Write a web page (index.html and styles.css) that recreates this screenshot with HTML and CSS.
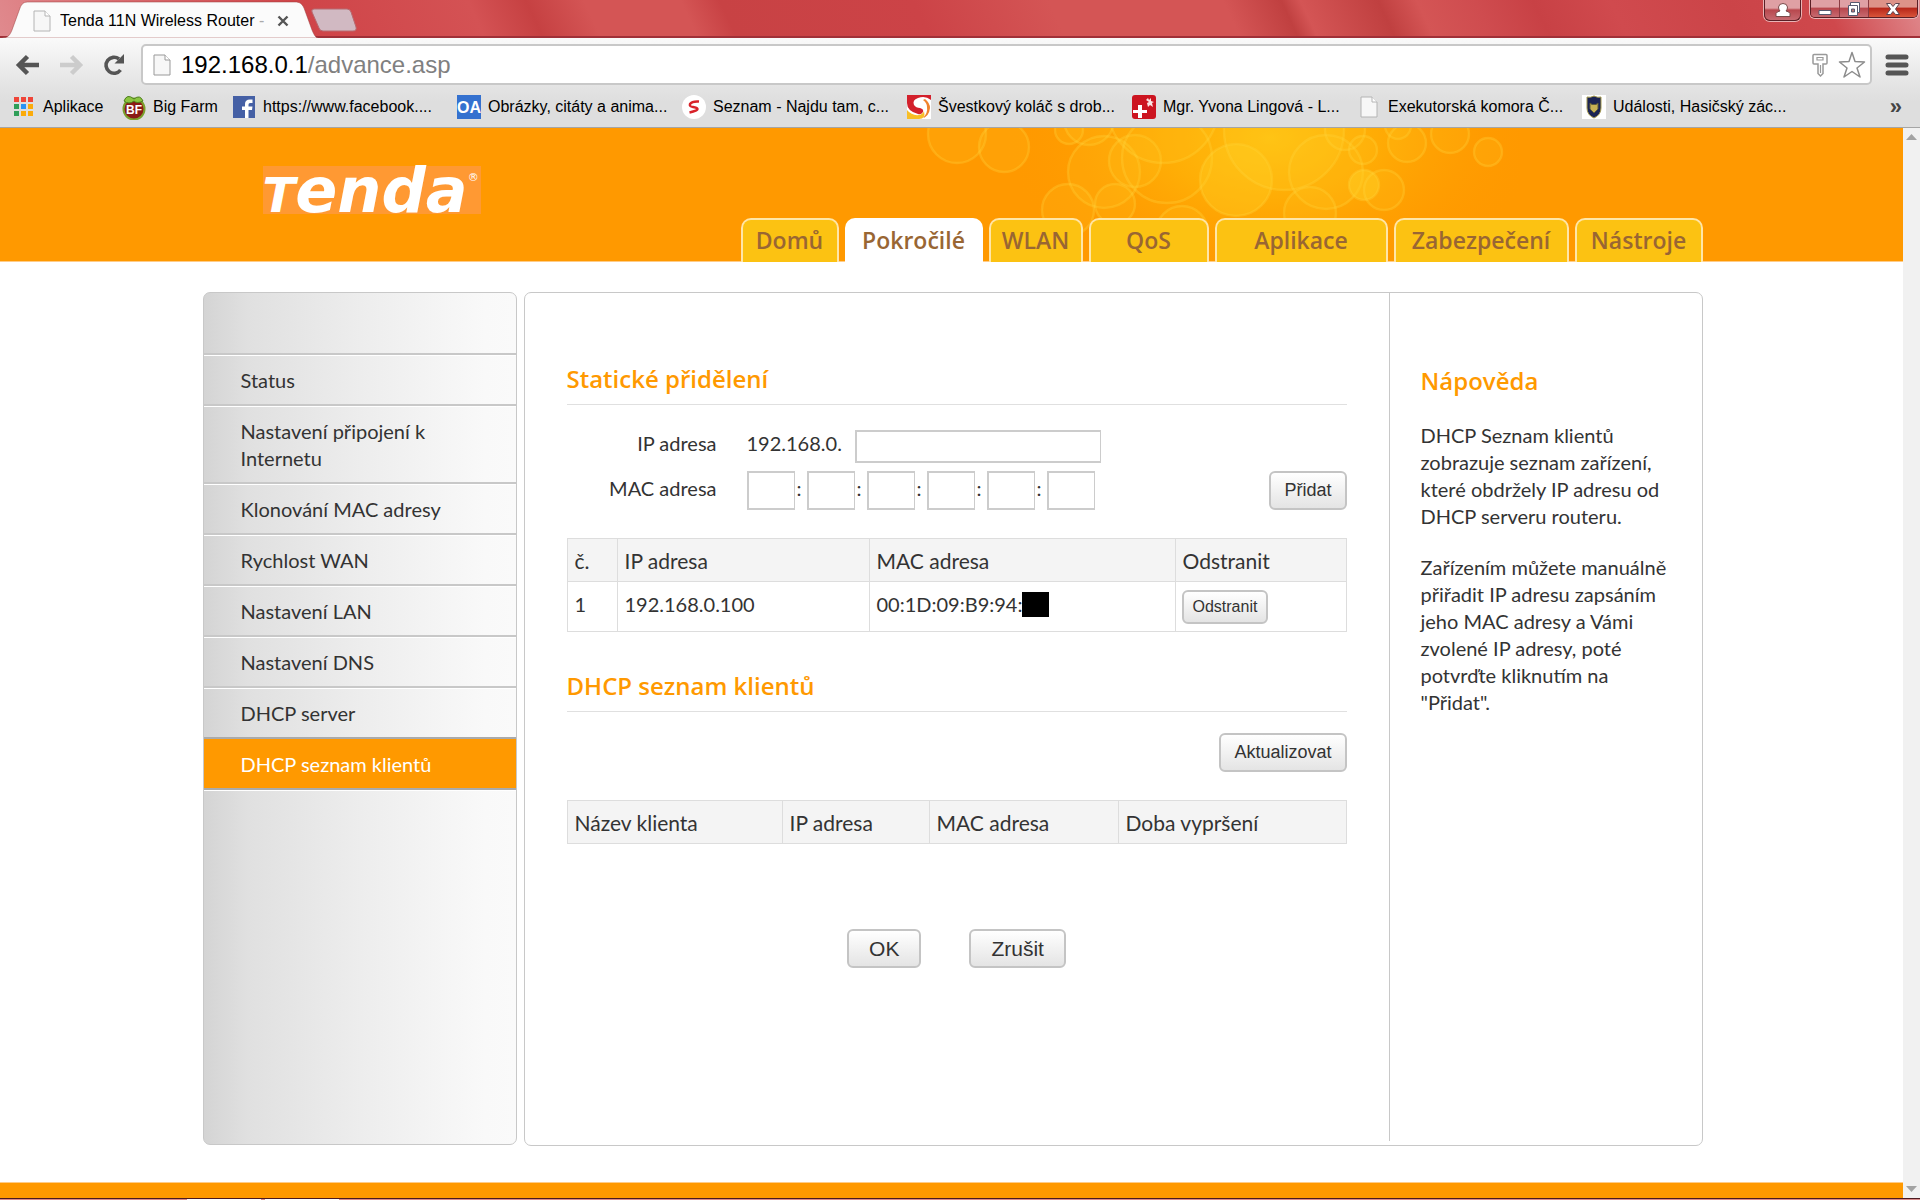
FILE: index.html
```html
<!DOCTYPE html>
<html lang="cs">
<head>
    <meta charset="UTF-8">
    <meta name="viewport" content="width=device-width, initial-scale=1.0">
    <title>Tenda 11N Wireless Router</title>
    <link rel="stylesheet" href="styles.css">
</head>
<body>

    <!-- window frame -->
    <div class="titlebar">
        <div class="browser-tab">
            <svg class="tab-shape" viewBox="0 0 316 37" preserveAspectRatio="none">
                <path d="M0 37 C6 37 8 34 10 29 L18 7 C20 2 22 1 27 1 H293 C298 1 300 3 302 7 L310 29 C312 34 314 37 316 37 Z" fill="#fbfbfb" stroke="#9c3c3c" stroke-opacity=".5"/>
            </svg>
            <svg class="page-icon" viewBox="0 0 18 22"><path d="M1 1h11l5 5v15H1z" fill="#f7f7f7" stroke="#b4b4b4"/><path d="M12 1v5h5" fill="#fff" stroke="#b4b4b4"/></svg>
            <span class="tab-title">Tenda 11N Wireless Router <i>-</i></span>
            <button class="tab-close" aria-label="Zavřít">
                <svg width="12" height="12" viewBox="0 0 12 12"><path d="M1.500 1.500l9 9M10.500 1.500l-9 9" stroke="#555" stroke-width="2.400"/></svg>
            </button>
        </div>
        <svg class="new-tab" width="48" height="24" viewBox="0 0 48 24"><path d="M4 1h33q3 0 4 3l5 15q1 4-3 4H13q-3 0-4-3L2 4q-1-3 2-3z" fill="#d1b9c2" stroke="#b76a70"/></svg>
        <div class="window-buttons">
            <button class="user-btn" aria-label="Uživatel">
                <svg width="16" height="16" viewBox="0 0 16 16"><path d="M1 14.500v-3q1-2 4-2.500-1.500-1.500-1.500-4Q4 1.500 8 1.500T12.500 5q0 2.500-1.500 4 3 .5 4 2.500v3z" fill="#fff" stroke="#7a4a4a"/></svg>
            </button>
            <div class="window-group">
                <button aria-label="Minimalizovat"><svg width="14" height="16" viewBox="0 0 14 16"><path d="M1 9.500h12v4H1z" fill="#fff" stroke="#555a70"/></svg></button>
                <button aria-label="Obnovit"><svg width="16" height="16" viewBox="0 0 16 16"><path d="M4.500 1.500h9v10h-9z" fill="#fff" stroke="#555a70"/><path d="M2.500 4.500h9v10h-9z" fill="#fff" stroke="#555a70"/><path d="M5.500 8h3v3h-3z" fill="#b77" stroke="#555a70"/></svg></button>
                <button class="close-btn" aria-label="Zavřít okno"><svg width="16" height="14" viewBox="0 0 16 14"><path d="M1.500 1.500h4L8 4.500l2.500-3h4L10.500 7l4 5.500h-4L8 9.500l-2.500 3h-4L5.500 7z" fill="#fff" stroke="#5c4450"/></svg></button>
            </div>
        </div>
    </div>

    <div class="toolbar">
        <button class="tool-btn" aria-label="Zpět">
            <svg width="26" height="24" viewBox="0 0 26 24"><path d="M24 12H5M12.500 3.500L4 12l8.500 8.500" fill="none" stroke="#555" stroke-width="4.500"/></svg>
        </button>
        <button class="tool-btn" aria-label="Vpřed">
            <svg width="26" height="24" viewBox="0 0 26 24"><path d="M2 12h19M13.500 3.500L22 12l-8.500 8.500" fill="none" stroke="#ccc" stroke-width="4.500"/></svg>
        </button>
        <button class="tool-btn" aria-label="Obnovit stránku">
            <svg width="24" height="24" viewBox="0 0 24 24"><path d="M18.500 17A8 8 0 1 1 17 6" fill="none" stroke="#555" stroke-width="3.600"/><path d="M22 1v9.500h-9.500z" fill="#555"/></svg>
        </button>
        <label class="omnibox">
            <svg class="page-icon" viewBox="0 0 18 22"><path d="M1 1h11l5 5v15H1z" fill="#f7f7f7" stroke="#999"/><path d="M12 1v5h5" fill="#fff" stroke="#999"/></svg>
            <span class="url">192.168.0.1<i>/advance.asp</i></span>
            <svg width="16" height="24" viewBox="0 0 16 24"><path d="M2 1.500h12q1 0 1 1V10q0 1-1 1h-3v9.500L8.500 23 6 20.500V11H2q-1 0-1-1V2.500q0-1 1-1z" fill="#fff" stroke="#999" stroke-width="1.500"/><path d="M5 4.500h6V7H5zM8.500 12v8" fill="none" stroke="#999" stroke-width="1.200"/></svg>
            <svg width="28" height="27" viewBox="0 0 28 27"><path d="M14 1.500l3 9 9.500.500-7.500 6 3 9-8-5.500L6 26l3-9-7.500-6 9.500-.5z" fill="#fff" stroke="#8c8c8c" stroke-width="1.500" stroke-linejoin="round"/></svg>
        </label>
        <button class="tool-btn menu-btn" aria-label="Nabídka">
            <svg width="24" height="22" viewBox="0 0 24 22"><path d="M3 3h18M3 11h18M3 19h18" stroke="#555" stroke-width="5" stroke-linecap="round"/></svg>
        </button>
    </div>

    <div class="bookmarks">
        <a class="bookmark short" href="#">
            <svg width="22" height="22" viewBox="0 0 22 22"><path d="M1 1h5v5H1zM8 1h5v5H8zM15 1h5v5h-5z" fill="#ef4538"/><path d="M1 8h5v5H1zM1 15h5v5H1z" fill="#2f9e58"/><path d="M8 8h5v5H8z" fill="#2a93f5"/><path d="M15 8h5v5h-5zM8 15h5v5H8zM15 15h5v5h-5z" fill="#fbab0a"/></svg>
            Aplikace</a>
        <a class="bookmark short" href="#">
            <svg width="24" height="26" viewBox="0 0 24 26"><circle cx="12" cy="15" r="10.500" fill="#8a1a15" stroke="#7aa02c" stroke-width="2"/><path d="M2 7Q5-1 12 5q6-5 9 2-6 3-9 0-5 4-10 0z" fill="#8bc53f" stroke="#4d7d1e"/><text x="12" y="20" text-anchor="middle" class="ico-bf">BF</text></svg>
            Big Farm</a>
        <a class="bookmark" href="#">
            <svg width="22" height="22" viewBox="0 0 22 22"><path d="M0 0h22v22H0z" fill="#4560a5"/><path d="M12 22v-8H9v-3.500h3V8q0-4.500 5-4.500h2.500V7H17q-1.500 0-1.500 1.500v2h4L19 14h-3.500v8z" fill="#fff"/></svg>
            https://www.facebook....</a>
        <a class="bookmark" href="#">
            <svg width="24" height="24" viewBox="0 0 24 24"><path d="M0 0h24v24H0z" fill="#3471cf"/><text x="12" y="18" text-anchor="middle" class="ico-oa">OA</text></svg>
            Obrázky, citáty a anima...</a>
        <a class="bookmark" href="#">
            <svg width="24" height="24" viewBox="0 0 24 24"><circle cx="12" cy="12" r="12" fill="#fff"/><path d="M17 6.500q-7-.5-9 2.500-1 2.500 3 3t4.500 2-8 3.500" fill="none" stroke="#d8232a" stroke-width="2.400"/></svg>
            Seznam - Najdu tam, c...</a>
        <a class="bookmark" href="#">
            <svg width="24" height="24" viewBox="0 0 24 24"><path d="M0 0h24v24H0z" fill="#fff"/><path d="M0 0h24v5Q18 0 11 3 5 5 7 10q2 3 6 3 4 1 3 4-2 3-5 2Q0 16 0 8z" fill="#d3202c"/><path d="M18 4q5 4 5 9-1 8-7 10 5-5 4-11 0-4-4-7z" fill="#f0832c"/><path d="M0 15q5 6 12 5 4-1 5-4 2 8-5 8H0z" fill="#f8be26"/></svg>
            Švestkový koláč s drob...</a>
        <a class="bookmark" href="#">
            <svg width="24" height="24" viewBox="0 0 24 24"><rect width="24" height="24" rx="3" fill="#cc1420"/><path d="M6 10h4v5h5v3h-5v5H6v-5H1v-3h5z" fill="#fff"/><path d="M16 3l1 2 2-2v3l3 1-2 1 1 4-3-2-2 2-1-4 2-1-3-2z" fill="#fbe4e4"/></svg>
            Mgr. Yvona Lingová - L...</a>
        <a class="bookmark" href="#">
            <svg class="page-icon" viewBox="0 0 18 22"><path d="M1 1h11l5 5v15H1z" fill="#f7f7f7" stroke="#b4b4b4"/><path d="M12 1v5h5" fill="#fff" stroke="#b4b4b4"/></svg>
            Exekutorská komora Č...</a>
        <a class="bookmark" href="#">
            <svg width="24" height="24" viewBox="0 0 24 24"><path d="M0 0h24v24H0z" fill="#fff"/><path d="M12 1q4 2 7 1v11q0 7-7 10-7-3-7-10V2q3 1 7-1z" fill="#1c2454" stroke="#a59a4f"/><path d="M8 8l2 1.500h4L16 8v6l-4 4-4-4z" fill="#c8b254" stroke="#5d5a3c"/></svg>
            Události, Hasičský zác...</a>
        <button class="more" aria-label="Další záložky">»</button>
    </div>

    <!-- router page -->
    <div class="viewport">
        <div class="page">
            <header class="header">
                <div class="container header-inner">
                    <svg class="bubbles" width="600" height="133" viewBox="0 0 600 133">
                        <defs>
                            <radialGradient id="glow" cx="350" cy="10" r="270" gradientUnits="userSpaceOnUse" gradientTransform="matrix(1 0 0 .6 0 4)">
                                <stop offset="0" stop-color="#ffc010"/>
                                <stop offset=".4" stop-color="#ffb006" stop-opacity=".8"/>
                                <stop offset="1" stop-color="#ff9900" stop-opacity="0"/>
                            </radialGradient>
                        </defs>
                        <rect width="600" height="133" fill="url(#glow)"/>
                        <g fill="#ffd024" fill-opacity=".16" stroke="#ffd640" stroke-opacity=".3" stroke-width="2.400">
                            <circle cx="37" cy="6" r="29"/>
                            <circle cx="84" cy="19" r="25"/>
                            <circle cx="149" cy="2" r="14"/>
                            <circle cx="169" cy="-8" r="25"/>
                            <circle cx="184" cy="44" r="36"/>
                            <circle cx="215" cy="33" r="26"/>
                            <circle cx="243" cy="-20" r="55"/>
                            <circle cx="148" cy="82" r="26"/>
                            <circle cx="195" cy="76" r="20"/>
                            <circle cx="247" cy="30" r="45" fill-opacity=".05"/>
                            <circle cx="262" cy="104" r="26"/>
                            <circle cx="316" cy="52" r="36" fill-opacity=".35"/>
                            <circle cx="364" cy="2" r="60" fill-opacity=".25"/>
                            <circle cx="406" cy="44" r="37"/>
                            <circle cx="390" cy="85" r="26"/>
                            <circle cx="425" cy="2" r="20"/>
                            <circle cx="443" cy="22" r="14"/>
                            <circle cx="444" cy="57" r="15" fill-opacity=".5"/>
                            <circle cx="464" cy="62" r="20"/>
                            <circle cx="478" cy="-2" r="13"/>
                            <circle cx="487" cy="15" r="19"/>
                            <circle cx="530" cy="6" r="19"/>
                            <circle cx="568" cy="24" r="14"/>
                        </g>
                    </svg>
                    <a class="logo" href="#"><span class="logo-t">T</span>enda<span class="logo-r">®</span></a>
                    <nav class="tabs">
                        <a class="tab" href="#">Domů</a>
                        <a class="tab active" href="#">Pokročilé</a>
                        <a class="tab" href="#">WLAN</a>
                        <a class="tab" href="#">QoS</a>
                        <a class="tab" href="#">Aplikace</a>
                        <a class="tab" href="#">Zabezpečení</a>
                        <a class="tab" href="#">Nástroje</a>
                    </nav>
                </div>
            </header>

            <div class="container content">
                <nav class="sidebar">
                    <a href="#">Status</a>
                    <a href="#">Nastavení připojení k Internetu</a>
                    <a href="#">Klonování MAC adresy</a>
                    <a href="#">Rychlost WAN</a>
                    <a href="#">Nastavení LAN</a>
                    <a href="#">Nastavení DNS</a>
                    <a href="#">DHCP server</a>
                    <a href="#" class="active">DHCP seznam klientů</a>
                </nav>

                <div class="panel">
                    <main class="main">
                        <h2>Statické přidělení</h2>
                        <form class="static-form">
                            <div class="form-row">
                                <label class="form-label" for="ip">IP adresa</label>
                                <span class="ip-prefix">192.168.0.</span>
                                <input class="ip-input" type="text" id="ip">
                            </div>
                            <div class="form-row">
                                <label class="form-label" for="mac1">MAC adresa</label>
                                <div class="mac">
                                    <input type="text" id="mac1"><span>:</span>
                                    <input type="text" aria-label="MAC 2"><span>:</span>
                                    <input type="text" aria-label="MAC 3"><span>:</span>
                                    <input type="text" aria-label="MAC 4"><span>:</span>
                                    <input type="text" aria-label="MAC 5"><span>:</span>
                                    <input type="text" aria-label="MAC 6">
                                </div>
                                <button type="button" class="btn add">Přidat</button>
                            </div>
                        </form>

                        <table class="list static-list">
                            <thead>
                                <tr><th>č.</th><th>IP adresa</th><th>MAC adresa</th><th>Odstranit</th></tr>
                            </thead>
                            <tbody>
                                <tr>
                                    <td>1</td>
                                    <td>192.168.0.100</td>
                                    <td><div class="mac-cell">00:1D:09:B9:94:<span class="redacted"></span></div></td>
                                    <td class="action-cell"><button type="button" class="btn small">Odstranit</button></td>
                                </tr>
                            </tbody>
                        </table>

                        <h2>DHCP seznam klientů</h2>
                        <div class="refresh">
                            <button type="button" class="btn">Aktualizovat</button>
                        </div>
                        <table class="list client-list">
                            <thead>
                                <tr><th>Název klienta</th><th>IP adresa</th><th>MAC adresa</th><th>Doba vypršení</th></tr>
                            </thead>
                        </table>

                        <div class="actions">
                            <button type="button" class="btn large">OK</button>
                            <button type="button" class="btn large">Zrušit</button>
                        </div>
                    </main>

                    <aside class="help">
                        <h3>Nápověda</h3>
                        <p>DHCP Seznam klientů zobrazuje seznam zařízení, které obdržely IP adresu od DHCP serveru routeru.</p>
                        <p>Zařízením můžete manuálně přiřadit IP adresu zapsáním jeho MAC adresy a Vámi zvolené IP adresy, poté potvrďte kliknutím na "Přidat".</p>
                    </aside>
                </div>
            </div>

            <footer class="footer"></footer>
        </div>

        <div class="scrollbar">
            <svg width="11" height="6" viewBox="0 0 11 6"><path d="M0 6L5.500 0 11 6z" fill="#a3a3a3"/></svg>
            <svg width="11" height="6" viewBox="0 0 11 6"><path d="M0 0l5.500 6L11 0z" fill="#a3a3a3"/></svg>
        </div>
    </div>
    <div class="taskbar"><span></span><span></span></div>

</body>
</html>
```
FILE: styles.css
```css
* {
    box-sizing: border-box;
}

body {
    margin: 0;
    min-height: 100vh;
    display: flex;
    flex-direction: column;
    font-family: Lato, "Open Sans", sans-serif;
    font-size: 20px;
    line-height: 27px;
    color: #333;
    background: #fff;
}

a {
    color: inherit;
    text-decoration: none;
}

button {
    font-family: "Liberation Sans", Arial, sans-serif;
    cursor: pointer;
}

svg {
    flex: none;
}

i {
    font-style: normal;
}

/* window frame */
.titlebar {
    display: flex;
    height: 38px;
    padding-left: 2px;
    border-bottom: 2px solid #a03038;
    font: 16px/24px "Liberation Sans", Arial, sans-serif;
    color: #000;
    background: linear-gradient(65deg, #e08a8e 0%, #cf4448 16%, #d45254 25%, #c64142 28%, #d45555 31%, #d45555 36%, #c84244 38%, #cc4347 48%, #d45555 55%, #d45555 64%, #c04040 67%, #d45555 68%, #c04040 72%, #d45555 74%, #cf4c4f 77%, #c84145 80%, #d04a4e 84%, #cb4448 90%, #cf484c 95%, #e08a8e 100%);
}

.browser-tab {
    position: relative;
    display: flex;
    align-items: center;
    width: 316px;
    height: 38px;
    padding: 4px 0 0 31px;
}

.tab-shape {
    position: absolute;
    left: 0;
    top: 1px;
    width: 100%;
    height: 37px;
}

.page-icon {
    position: relative;
    width: 18px;
    height: 22px;
}

.tab-title {
    position: relative;
    width: 214px;
    margin-left: 9px;
    overflow: hidden;
    white-space: nowrap;
}

.tab-title i {
    color: #aaa;
}

.tab-close {
    position: relative;
    display: flex;
    padding: 3px;
    border: 0;
    background: none;
}

.new-tab {
    margin: 8px 0 0 -8px;
}

.window-buttons {
    display: flex;
    align-items: flex-start;
    gap: 9px;
    margin-left: auto;
    padding-right: 2px;
}

.window-buttons button {
    display: flex;
    align-items: center;
    justify-content: center;
    height: 17px;
    padding: 0;
    border: 0;
    background: linear-gradient(#dfa0a4 40%, #b8484e 50%, #c76a70);
}

.window-buttons .user-btn {
    width: 37px;
    height: 21px;
    border: 1px solid #5a1f25;
    border-top: 0;
    border-radius: 0 0 6px 6px;
    box-shadow: 0 0 0 1px #eab4b6;
}

.window-group {
    display: flex;
    border: 1px solid #5a1f25;
    border-top: 0;
    border-radius: 0 0 5px 5px;
    box-shadow: 0 0 0 1px #eab4b6;
    overflow: hidden;
}

.window-group button {
    width: 29px;
    border-right: 1px solid #8a3b42;
}

.window-group .close-btn {
    width: 48px;
    border-right: 0;
    background: linear-gradient(#dd9288 40%, #b8281a 50%, #d9553a);
}

.toolbar {
    display: flex;
    align-items: center;
    gap: 4px;
    padding: 6px 7px 0 8px;
    background: linear-gradient(#fafafa, #e4e4e4);
}

.tool-btn {
    display: flex;
    align-items: center;
    justify-content: center;
    width: 39px;
    height: 32px;
    padding: 0;
    border: 0;
    background: none;
}

.menu-btn {
    width: 32px;
}

.omnibox {
    flex: 1;
    display: flex;
    align-items: center;
    gap: 10px;
    height: 41px;
    margin: 0 5px 0 4px;
    padding: 0 4px 0 10px;
    border: 2px solid #c8c8c8;
    border-radius: 5px;
    background: #fff;
}

.url {
    flex: 1;
    font: 24px/28px "Liberation Sans", Arial, sans-serif;
    color: #000;
}

.url i {
    color: #808080;
}

.bookmarks {
    display: flex;
    align-items: center;
    height: 43px;
    padding: 2px 12px 0;
    border-bottom: 1px solid #a5a5a5;
    background: linear-gradient(#e4e4e4, #dedede 40%);
    font: 16px/24px "Liberation Sans", Arial, sans-serif;
    color: #000;
}

.bookmark {
    display: flex;
    align-items: center;
    gap: 7px;
    width: 225px;
    white-space: nowrap;
}

.bookmark svg {
    width: 24px;
}

.bookmark.short {
    width: 110px;
}

.more {
    margin-left: auto;
    padding: 0 6px;
    border: 0;
    background: none;
    font-size: 22px;
    font-weight: bold;
    color: #444;
}

.ico-bf {
    font: bold 12px "Liberation Sans", sans-serif;
    fill: #fff;
}

.ico-oa {
    font: bold 16px "Liberation Sans", sans-serif;
    fill: #fff;
}

/* router page */
.viewport {
    flex: 1;
    display: flex;
}

.page {
    flex: 1;
    display: flex;
    flex-direction: column;
}

.container {
    width: 100%;
    max-width: 1502px;
    margin: 0 auto;
    padding-left: 2px;
}

.header {
    border-bottom: 1px solid #ffcc88;
    background: #ff9900;
}

.header-inner {
    position: relative;
    display: flex;
    justify-content: space-between;
    align-items: flex-end;
    height: 133px;
}

.bubbles {
    position: absolute;
    right: 183px;
    top: 0;
}

.logo {
    position: relative;
    display: flex;
    align-items: baseline;
    width: 218px;
    height: 48px;
    margin: 0 0 47px 60px;
    background: #ff9933;
    color: #fff;
    font-family: "DejaVu Sans", sans-serif;
    font-size: 62px;
    font-weight: 700;
    font-style: italic;
    line-height: 50px;
}

.logo-t {
    font-size: 48px;
}

.logo-r {
    align-self: flex-start;
    font-size: 11px;
    font-weight: 400;
    line-height: 24px;
}

.tabs {
    position: relative;
    display: flex;
    gap: 6px;
    margin-bottom: -1px;
}

.tab {
    width: 98px;
    height: 44px;
    border: 2px solid #ffe6a8;
    border-bottom: 0;
    border-radius: 10px 10px 0 0;
    background: #fcc212;
    color: #996633;
    font-family: "Open Sans", sans-serif;
    font-size: 23px;
    font-weight: 600;
    line-height: 40px;
    text-align: center;
}

.tab.active {
    width: 138px;
    border-color: #fff;
    background: #fff;
}

.tab:nth-child(3) {
    width: 94px;
}

.tab:nth-child(4) {
    width: 120px;
}

.tab:nth-child(5) {
    width: 173px;
}

.tab:nth-child(6) {
    width: 175px;
}

.tab:nth-child(7) {
    width: 128px;
}

.content {
    flex: 1;
    display: flex;
    gap: 7px;
    padding-top: 30px;
    padding-bottom: 36px;
}

.sidebar {
    width: 314px;
    margin-bottom: 1px;
    padding-top: 60px;
    border: 1px solid #c8c8c8;
    border-radius: 7px;
    background: linear-gradient(to right, #d4d4d4, #e0e0e0 14%, #ededed 50%, #f9f9f9 90%, #fafafa);
}

.sidebar a {
    display: block;
    padding: 12px 60px 10px 37px;
    border-top: 2px solid #c8c8c8;
    box-shadow: inset 0 1px #fff;
}

.sidebar a.active {
    border-top-color: #aaa;
    border-bottom: 2px solid #aaa;
    background: #ff9900;
    box-shadow: 0 1px #fff;
    color: #fff;
}

.panel {
    flex: 1;
    display: flex;
    padding-bottom: 4px;
    border: 1px solid #c8c8c8;
    border-radius: 7px;
}

.main {
    flex: 1;
    padding: 72px 42px 0;
}

h2, h3 {
    margin: 0;
    font-family: "Open Sans", sans-serif;
    font-size: 24px;
    font-weight: 600;
    line-height: 27px;
    color: #ff9900;
}

h2 {
    padding-bottom: 12px;
    border-bottom: 1px solid #e0e0e0;
}

.static-form {
    display: flex;
    flex-direction: column;
    gap: 8px;
    margin: 25px 0 28px;
}

.form-row {
    display: flex;
    align-items: flex-start;
}

.form-label {
    width: 150px;
    margin-right: 30px;
    text-align: right;
}

.ip-prefix {
    width: 108px;
}

.form-row input {
    border: 2px solid #ccc;
    border-right-width: 1px;
    background: #fff;
    font: inherit;
}

.ip-input {
    width: 246px;
    height: 33px;
}

.mac {
    display: flex;
}

.mac input {
    width: 48px;
    height: 39px;
}

.mac span {
    width: 12px;
    padding: 4px 2px;
}

.form-row + .form-row .form-label {
    padding-top: 4px;
}

.btn {
    height: 39px;
    padding: 0 13px;
    border: 2px solid #c4c4c4;
    border-radius: 6px;
    background: linear-gradient(#fff, #e4e4e4);
    font-size: 18px;
    color: #333;
}

.btn.add {
    margin-left: auto;
}

.btn.small {
    display: block;
    height: 34px;
    padding: 0 9px;
    font-size: 16px;
}

.btn.large {
    padding: 0 20px;
    font-size: 21px;
}

.list {
    width: 100%;
    border-collapse: collapse;
    table-layout: fixed;
}

.list th {
    height: 43px;
    padding: 1px 7px 0;
    border: 1px solid #ddd;
    background: #f4f4f4;
    font-size: 21px;
    font-weight: 400;
    text-align: left;
}

.list td {
    height: 50px;
    padding: 0 7px 4px;
    border: 1px solid #ddd;
}

.list .action-cell {
    padding: 0 6px;
}

.static-list {
    margin-bottom: 40px;
}

.static-list th:nth-child(1) {
    width: 50px;
}

.static-list th:nth-child(2) {
    width: 252px;
}

.static-list th:nth-child(3) {
    width: 306px;
}

.mac-cell {
    display: flex;
    align-items: center;
}

.redacted {
    width: 27px;
    height: 25px;
    background: #000;
}

.refresh {
    display: flex;
    justify-content: flex-end;
    margin: 21px 0 28px;
}

.client-list th:nth-child(1) {
    width: 215px;
}

.client-list th:nth-child(2) {
    width: 147px;
}

.client-list th:nth-child(3) {
    width: 189px;
}

.actions {
    display: flex;
    justify-content: center;
    gap: 48px;
    margin-top: 85px;
}

.help {
    width: 313px;
    padding: 74px 28px 0 31px;
    border-left: 1px solid #c8c8c8;
}

.help h3 {
    margin-bottom: 28px;
}

.help p {
    margin: 0 0 24px;
}

.footer {
    height: 16px;
    border-top: 1px solid #ffcc88;
    background: #ff9900;
}

.scrollbar {
    display: flex;
    flex-direction: column;
    justify-content: space-between;
    align-items: center;
    width: 17px;
    padding: 6px 0;
    background: #f1f1f1;
}

.taskbar {
    display: flex;
    gap: 4px;
    height: 2px;
    padding-left: 187px;
    border-top: 1px solid #4a1a20;
    background: #d88a8a;
}

.taskbar span {
    width: 74px;
    background: #fff;
}
```
